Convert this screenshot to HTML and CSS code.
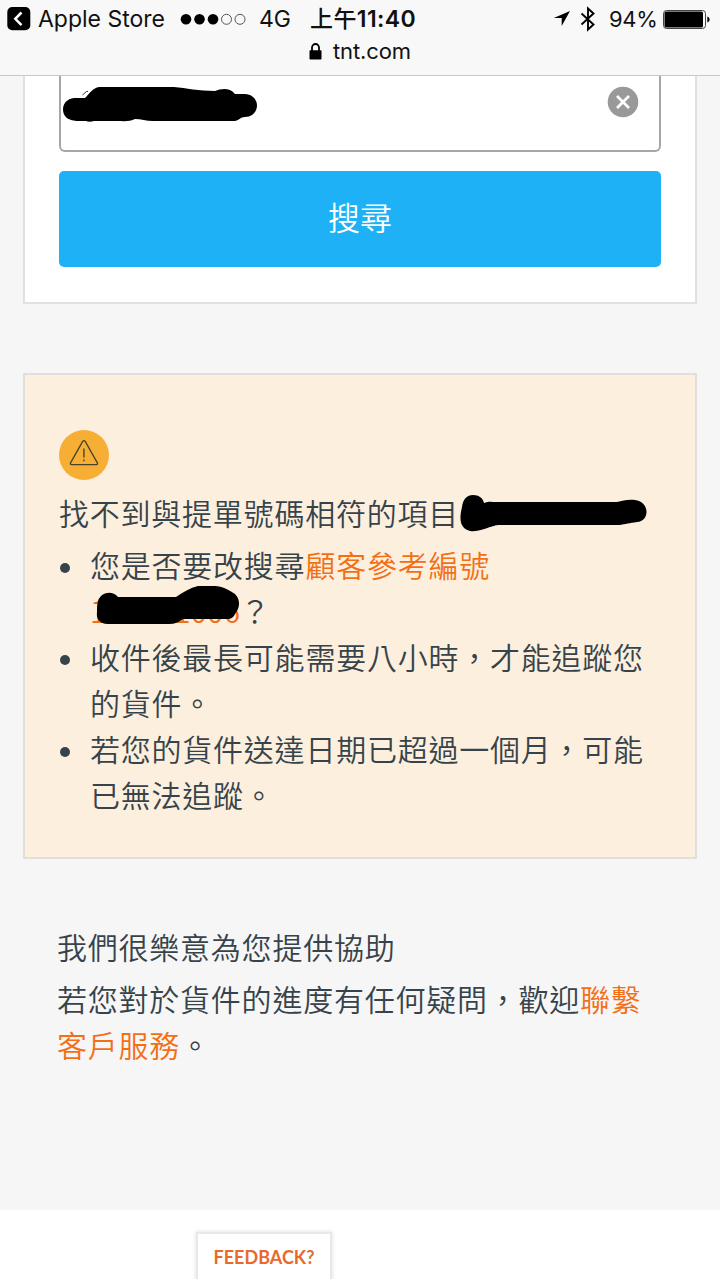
FILE: index.html
```
<!DOCTYPE html>
<html lang="zh-Hant">
<head>
	<meta charset="UTF-8">
	<meta name="viewport" content="width=device-width">
	<title>tnt.com</title>
	<link rel="stylesheet" href="styles.css">
</head>
<body>
	<div id="topbar">
		<div class="status">
			<svg class="back" width="24" height="24" viewBox="0 0 24 24"><rect x="0.3" width="23" height="23.3" rx="5"/><path d="M14.5 5.5L8.300 11.800l6.200 6.300" fill="none" stroke="#fff" stroke-width="2.500"/></svg>
			<span class="app">Apple Store</span>
			<svg class="signal" width="66" height="13" viewBox="0 0 66 13">
				<circle cx="6" cy="6.300" r="5.300"/><circle cx="19.500" cy="6.300" r="5.300"/><circle cx="33" cy="6.300" r="5.300"/>
				<g fill="none" stroke="#555" stroke-width="1"><circle cx="46.500" cy="6.300" r="5"/><circle cx="60" cy="6.300" r="5"/></g>
			</svg>
			<span class="net">4G</span>
			<span class="time"><span class="ampm">上午</span>11:40</span>
			<svg class="arrow" width="18" height="18" viewBox="0 0 18 18"><path d="M17 1L0.800 8h7.900v8z"/></svg>
			<svg class="bt" width="16" height="26" viewBox="0 0 16 26"><path d="M1.500 7.500L13.500 18.500L8 23.500V2.500L13.500 7.500L1.500 18.500" fill="none" stroke="#000" stroke-width="1.900"/></svg>
			<span class="percent">94%</span>
			<svg class="battery" width="47" height="19" viewBox="0 0 47 19"><rect x="0.500" y="0.500" width="42" height="18" rx="3" fill="none" stroke="#444"/><rect x="1.500" y="1.500" width="38.500" height="16" rx="1.500"/><path d="M44.300 6.500c3 1 3 5 0 6z"/></svg>
		</div>
		<div class="address">
			<svg width="13" height="17" viewBox="0 0 13 17"><rect x="0.500" y="7.300" width="12" height="9.300" rx="0.800"/><path d="M3 8V4.500a3.500 3.500 0 0 1 7 0V8" fill="none" stroke="#000" stroke-width="1.800"/></svg>
			<span>tnt.com</span>
		</div>
	</div>

	<div id="search">
		<div class="field">
			<svg class="mark" width="200" height="42" viewBox="61 84 200 42"><path d="M82.500 95l4-3.500h1.500" fill="none" stroke="#333"/><path d="M74 98h11c5-5 8-10 14-11h75c12 1 25 4 41 4 6-2 14-4 20 3h10c16 1 16 22 0 23-5 0-5 3-10 4h-82c-7 0-12-2-18-2-5 3-13 2-18 2h-23c-3 1-6 1-8 0-10 0-22 1-23-11 0-7 4-11 11-12z"/></svg>
			<svg class="clear" width="32" height="32" viewBox="0 0 32 32"><circle cx="16" cy="16" r="15.300" fill="#999"/><path d="M10 10l12 12M22 10L10 22" stroke="#fff" stroke-width="2.700"/></svg>
		</div>
		<div class="button">搜尋</div>
	</div>

	<div id="alert">
		<svg class="warn" width="50" height="50" viewBox="0 0 50 50"><circle cx="25" cy="25" r="25" fill="#f6ae35"/><path d="M23.800 11.200q1.200-1.200 2.300 0L38.400 33q.5 1.600-1 1.600H12.500q-1.500 0-1-1.600zM24.900 18.500v9M24.900 29.500v1.800" fill="none" stroke="#4a4328" stroke-width="1.400"/></svg>
		<div class="title">找不到與提單號碼相符的項目<svg class="mark" width="190" height="40" viewBox="458 493 190 40"><path d="M462 507c1-8 5-12 11-12 6 0 10 3 11 8 5-2 8-1 12-1h121c6-1 10-3 18-2 15 2 15 21 2 22-8 1-11 2-18 3H500c-5 0-6 1-10 2-6 2-13 5-20 4-12-3-10-15-8-24z"/></svg></div>
		<ul>
			<li>您是否要改搜尋<a>顧客參考編號</a><br><a class="number"><span>1</span><span>1006</span><svg class="mark" width="146" height="44" viewBox="95 584 146 44"><path d="M99 601c3-9 14-11 20-4h58c7-5 14-9 22-11h17c7 0 14 4 20 8 5 5 5 12 2 17-3 4-3 7-8 8h-46c-4 3-8 5-14 5h-61c-9 0-12-6-11-12 0-4 0-7 1-11z"/></svg></a>？</li>
			<li>收件後最長可能需要八小時，才能追蹤您的貨件。</li>
			<li>若您的貨件送達日期已超過一個月，可能已無法追蹤。</li>
		</ul>
	</div>

	<div id="help">
		<p class="first">我們很樂意為您提供協助</p>
		<p>若您對於貨件的進度有任何疑問，歡迎<a>聯繫</a><br><a>客戶服務</a>。</p>
	</div>

	<div id="footer">
		<div class="feedback">FEEDBACK?</div>
	</div>
</body>
</html>
```
FILE: styles.css
```
* {
	box-sizing:border-box;
}
body {
	margin:0;
	width:720px;
	height:1279px;
	overflow:hidden;
	display:flex;
	flex-direction:column;
	background:#f6f6f6;
	color:#36434b;
	font:350 30px/46px "Noto Sans CJK TC", sans-serif;
	letter-spacing:0.77px;
}
svg {
	display:block;
	flex:none;
}
p, ul {
	margin:0;
	padding:0;
}
a {
	color:#f36f16;
}
#topbar {
	height:76px;
	flex:none;
	background:#f8f8f8;
	border-bottom:1px solid #c8c8ca;
	color:#111;
	font:400 22px/32px Inter, "Noto Sans CJK TC", sans-serif;
	letter-spacing:0;
}
.status {
	height:38px;
	display:flex;
	align-items:center;
	padding-left:7px;
	white-space:nowrap;
}
.app {
	width:135px;
	margin-left:7px;
	font-size:23px;
}
.signal {
	margin-left:7px;
}
.net {
	width:51px;
	margin-left:13px;
	font-size:23px;
}
.time {
	width:243px;
	font-size:23px;
	font-weight:600;
	letter-spacing:0.4px;
}
.ampm {
	font-weight:500;
}
.bt {
	margin-left:9px;
}
.percent {
	width:54px;
	margin-left:13px;
	letter-spacing:-0.3px;
}
.address {
	display:flex;
	align-items:center;
	justify-content:center;
	gap:11px;
	height:26px;
	letter-spacing:-0.1px;
}
#search {
	flex:none;
	width:674px;
	height:228px;
	margin-left:23px;
	padding:0 34px;
	background:#fff;
	border:2px solid #e1e1e1;
	border-top:0;
}
.field {
	height:76px;
	display:flex;
	justify-content:space-between;
	border:2px solid #a6a6a6;
	border-top:0;
	border-radius:0 0 6px 6px;
	padding:8px 20px 0 0;
}
.field .clear {
	margin-top:2px;
}
.button {
	height:96px;
	margin-top:19px;
	background:#1eb1f6;
	border-radius:5px;
	color:#fff;
	text-align:center;
	font-size:32px;
	line-height:90px;
	letter-spacing:0;
}
#alert {
	flex:none;
	width:674px;
	height:486px;
	margin:69px 0 0 23px;
	padding:55px 34px 0;
	background:#fdefdd;
	border:2px solid #e1dfdc;
}
.title {
	display:flex;
	margin-top:9px;
	white-space:nowrap;
}
.title .mark {
	margin:4px 0 0 -1px;
}
#alert ul {
	margin-top:6px;
	list-style:none;
}
#alert li {
	position:relative;
	padding-left:31px;
}
#alert li:before {
	content:"";
	position:absolute;
	left:1px;
	top:22px;
	width:10px;
	height:10px;
	border-radius:50%;
	background:#36434b;
}
.number {
	display:inline-flex;
	justify-content:space-between;
	position:relative;
	width:150px;
	height:46px;
	vertical-align:top;
	letter-spacing:0;
}
.number .mark {
	position:absolute;
	left:4px;
	top:-3px;
}
#help {
	flex:none;
	height:351px;
	padding:64px 57px 0;
}
#help .first {
	margin-bottom:6px;
}
#footer {
	flex:1;
	display:flex;
	padding:22px 0 0 196px;
	background:#fff;
}
.feedback {
	width:136px;
	border:2px solid #e8e8e8;
	border-bottom:0;
	box-shadow:0 0 4px #ddd;
	color:#e8692d;
	font:700 18px/46px Lato, sans-serif;
	text-align:center;
	letter-spacing:0;
}
```
